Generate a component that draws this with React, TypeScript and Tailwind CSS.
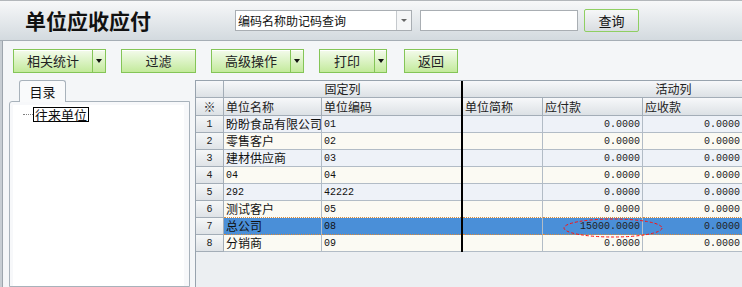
const CN = "font-['Noto_Sans_CJK_SC',sans-serif]";
const MONO = "font-['Liberation_Mono','Noto_Sans_CJK_SC',monospace] text-[10px]";

const ROWS = [
  { n: 1, name: "盼盼食品有限公司", code: "01", pay: "0.0000" },
  { n: 2, name: "零售客户", code: "02", pay: "0.0000" },
  { n: 3, name: "建材供应商", code: "03", pay: "0.0000" },
  { n: 4, name: "04", code: "04", pay: "0.0000" },
  { n: 5, name: "292", code: "42222", pay: "0.0000" },
  { n: 6, name: "测试客户", code: "05", pay: "0.0000" },
  { n: 7, name: "总公司", code: "08", pay: "15000.0000" },
  { n: 8, name: "分销商", code: "09", pay: "0.0000" },
];

const SELECTED = 7;

function Arrow() {
  return (
    <span className="block h-0 w-0 border-x-[3px] border-t-[4px] border-x-transparent border-t-[#111]" />
  );
}

function GreenBtn({ label, w, split }: { label: string; w: string; split?: string }) {
  return (
    <div className="flex h-[24px] border border-[#84c557] bg-gradient-to-b from-[#f4fbec] to-[#c3ea9b] shadow-[inset_0_1px_0_#ffffff]">
      <div className={`flex items-center justify-center text-[13px] text-[#222] ${w}`}>{label}</div>
      {split && (
        <div className={`flex items-center justify-center border-l border-[#84c557] ${split}`}>
          <Arrow />
        </div>
      )}
    </div>
  );
}

const isAscii = (s: string) => /^[\x00-\x7f]*$/.test(s);

function Row({ r }: { r: (typeof ROWS)[number] }) {
  const sel = r.n === SELECTED;
  const beforeSel = r.n === SELECTED - 1;
  const bg = sel ? "bg-[#4a8fd8]" : r.n % 2 ? "bg-[#eef2f8]" : "bg-[#fbfaf3]";
  const bb = sel || beforeSel
    ? "border-b border-b-[#d98a3a] [border-bottom-style:dotted]"
    : "border-b border-b-[#b2bcc6]";
  const cell = `h-full overflow-hidden whitespace-nowrap ${bg} ${bb}`;
  return (
    <div className="flex h-[17px]">
      <div className={`flex h-full w-[28px] items-center justify-center border-r border-b border-[#a3adb7] bg-gradient-to-b from-[#f5f7f8] to-[#dfe3e7] ${MONO} text-[#222]`}>
        {r.n}
      </div>
      <div className={`flex w-[98px] items-center border-r border-r-[#b2bcc6] pl-[2px] ${cell} ${isAscii(r.name) ? MONO : "text-[12px]"}`}>
        {r.name}
      </div>
      <div className={`flex w-[139px] items-center pl-[2px] ${cell} ${MONO}`}>{r.code}</div>
      <div className="h-full w-[2px] bg-black" />
      <div className={`w-[80px] border-r border-r-[#b2bcc6] ${cell}`} />
      <div className={`flex w-[100px] items-center justify-end border-r border-r-[#b2bcc6] pr-[2px] ${cell} ${MONO} text-[#222]`}>
        {r.pay}
      </div>
      <div className={`flex w-[100px] items-center justify-end border-r border-r-[#b2bcc6] pr-[2px] ${cell} ${MONO} text-[#222]`}>
        0.0000
      </div>
      <div className={`w-[200px] ${cell}`} />
    </div>
  );
}

function Grid() {
  const hd = "h-full bg-gradient-to-b from-[#f7f8fa] to-[#dce1e5] border-b border-[#a3adb7] text-[12px] text-[#222] flex items-center whitespace-nowrap overflow-hidden";
  return (
    <div className="relative ml-[5px] min-w-0 flex-1 overflow-hidden border-t border-l border-[#98a3ae] bg-[#eceff2]">
      <div className="w-[900px]">
        <div className="flex h-[17px]">
          <div className={`w-[28px] border-r ${hd}`} />
          <div className={`w-[237px] justify-center ${hd}`}>固定列</div>
          <div className="h-full w-[2px] bg-black" />
          <div className={`w-[422px] justify-center border-r ${hd}`}>活动列</div>
          <div className={`w-[200px] ${hd}`} />
        </div>
        <div className="flex h-[18px]">
          <div className={`w-[28px] justify-center border-r text-[#9aa0a6] ${hd}`}>※</div>
          <div className={`w-[98px] border-r pl-[2px] ${hd}`}>单位名称</div>
          <div className={`w-[139px] pl-[2px] ${hd}`}>单位编码</div>
          <div className="h-full w-[2px] bg-black" />
          <div className={`w-[80px] border-r pl-[2px] ${hd}`}>单位简称</div>
          <div className={`w-[100px] border-r pl-[2px] ${hd}`}>应付款</div>
          <div className={`w-[100px] border-r pl-[2px] ${hd}`}>应收款</div>
          <div className={`w-[200px] ${hd}`} />
        </div>
        {ROWS.map((r) => (
          <Row key={r.n} r={r} />
        ))}
      </div>
      <svg className="absolute left-[365px] top-[136px]" width="104" height="22" viewBox="0 0 104 22">
        <ellipse cx="52" cy="11" rx="49" ry="9" fill="none" stroke="#ff1010" strokeWidth="1" strokeDasharray="3 2" />
      </svg>
    </div>
  );
}

export default function App() {
  return (
    <div className={`flex h-[287px] w-[742px] flex-col overflow-hidden bg-[#f4f6f8] ${CN} text-[#111]`}>
      <div className="flex h-[41px] shrink-0 items-center border-t border-b border-t-[#b3b7bb] border-b-[#a6aeb6] bg-gradient-to-b from-[#f7f8f9] to-[#d3dadf]">
        <div className="w-[235px] pl-[25px] text-[21px] font-bold leading-none">单位应收应付</div>
        <div className="flex h-[21px] w-[177px] border border-[#a9aeb3] bg-white">
          <div className="flex flex-1 items-center pl-[2px] text-[12px]">编码名称助记码查询</div>
          <div className="flex w-[15px] items-center justify-center border-l border-[#c5c9cd] bg-[#f5f6f7]">
            <span className="block h-0 w-0 border-x-[3px] border-t-[3px] border-x-transparent border-t-[#666]" />
          </div>
        </div>
        <div className="ml-[8px] h-[21px] w-[158px] border border-[#a9aeb3] bg-white" />
        <div className="ml-[6px] flex h-[23px] w-[55px] items-center justify-center rounded-[2px] border border-[#8fcf62] bg-gradient-to-b from-[#f6f7f8] to-[#d9dde1] text-[13px]">
          查询
        </div>
      </div>

      <div className="flex min-h-0 flex-1 border-l-2 border-[#c7cdd3]">
        <div className="flex min-w-0 flex-1 flex-col border-l border-[#9da5ad]">
          <div className="flex pt-[8px] pl-[10px]">
            <GreenBtn label="相关统计" w="w-[78px]" split="w-[13px]" />
            <div className="ml-[15px]">
              <GreenBtn label="过滤" w="w-[73px]" />
            </div>
            <div className="ml-[15px]">
              <GreenBtn label="高级操作" w="w-[78px]" split="w-[13px]" />
            </div>
            <div className="ml-[15px]">
              <GreenBtn label="打印" w="w-[54px]" split="w-[12px]" />
            </div>
            <div className="ml-[17px]">
              <GreenBtn label="返回" w="w-[52px]" />
            </div>
          </div>

          <div className="mt-[7px] flex min-h-0 flex-1">
            <div className="ml-[6px] flex w-[181px] flex-col">
              <div className="relative z-10 mb-[-1px] ml-[10px] flex h-[22px] w-[47px] items-center justify-center rounded-t-[3px] border border-b-0 border-[#a8b2bb] bg-[#f9fafb] text-[13px]">
                目录
              </div>
              <div className="flex-1 rounded-tl-[3px] border border-[#a8b2bb] bg-[#f7f8fa] pt-[3px] pr-[5px] pl-[3px]">
                <div className="h-full bg-white pt-[2px] pl-[10px]">
                  <div className="flex items-center">
                    <span className="block w-[10px] border-t border-dotted border-[#808080]" />
                    <span className="border border-black px-[1px] text-[13px] leading-[13px]">往来单位</span>
                  </div>
                </div>
              </div>
            </div>
            <Grid />
          </div>
        </div>
      </div>
    </div>
  );
}
